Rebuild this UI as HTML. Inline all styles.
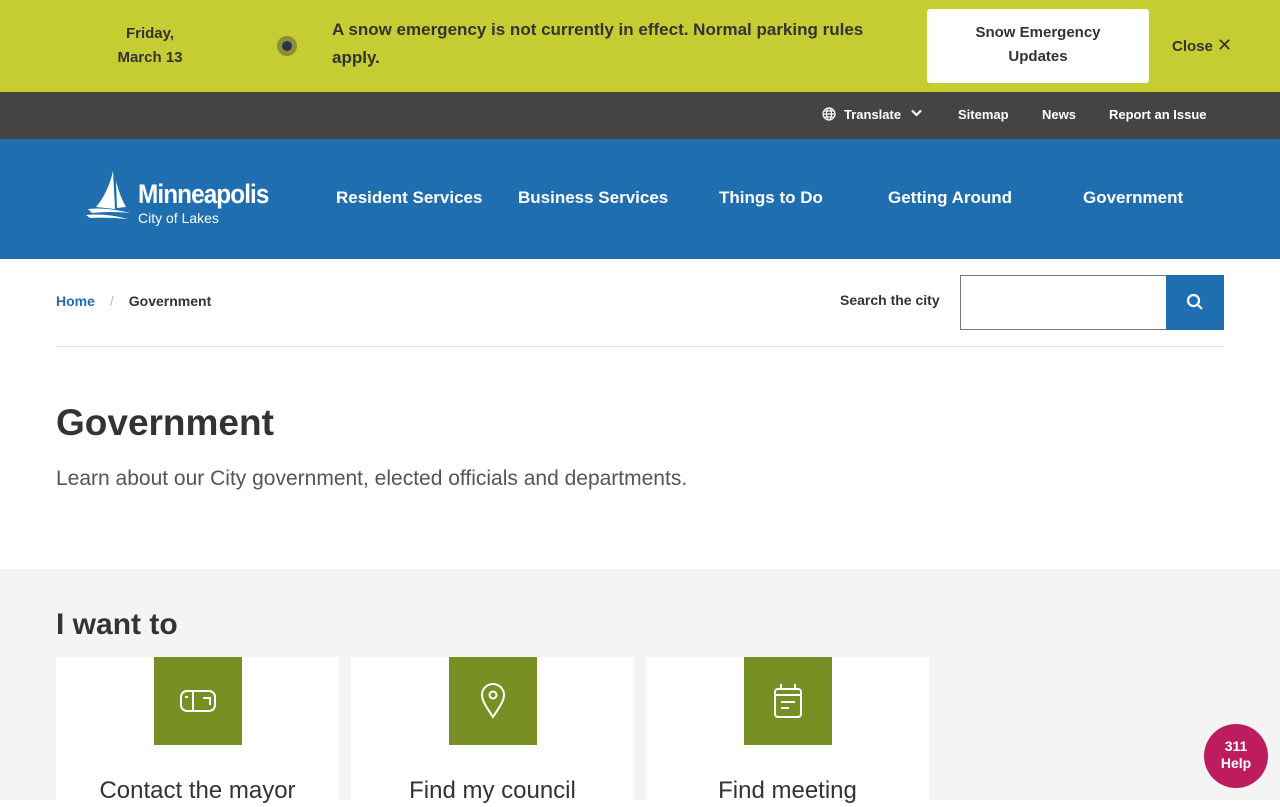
<!DOCTYPE html>
<html><head><meta charset="utf-8"><style>
*{margin:0;padding:0;box-sizing:border-box}
body{width:1280px;height:800px;overflow:hidden;font-family:"Liberation Sans",sans-serif;background:#fff;color:#333;position:relative}
.alert{position:absolute;top:0;left:0;width:1280px;height:92px;background:#c5cd32}
.date{position:absolute;left:110px;top:22px;width:80px;text-align:center;font-weight:bold;font-size:15px;line-height:24px;color:#333}
.dot{position:absolute;left:277px;top:36px;width:20px;height:20px;border-radius:50%;background:#8a8f3a}
.dot:after{content:"";position:absolute;left:5px;top:5px;width:10px;height:10px;border-radius:50%;background:#2d3340}
.msg{position:absolute;left:332px;top:16px;width:560px;font-weight:bold;font-size:17px;line-height:28px;color:#333}
.btn{position:absolute;left:927px;top:9px;width:222px;height:74px;background:#fff;border-radius:3px;text-align:center;font-weight:bold;font-size:15px;line-height:24px;padding-top:12px;color:#333}
.close{position:absolute;left:1172px;top:35px;font-weight:bold;font-size:15px;color:#333}
.util{position:absolute;top:92px;left:0;width:1280px;height:47px;background:#444}
.util span{position:absolute;top:15px;color:#fff;font-weight:bold;font-size:13px}
.nav{position:absolute;top:139px;left:0;width:1280px;height:120px;background:#1f6eb0}
.nav .i{position:absolute;top:49px;color:#fff;font-weight:bold;font-size:17px}
.crumb{position:absolute;top:293px;left:56px;font-size:14px;font-weight:bold}
.sl{position:absolute;left:840px;top:292px;font-size:14px;font-weight:bold;color:#333}
.sbox{position:absolute;left:960px;top:275px;width:207px;height:55px;border:1px solid #777;border-right:none}
.sbtn{position:absolute;left:1166px;top:275px;width:58px;height:55px;background:#1f6eb0}
.hr{position:absolute;left:56px;top:346px;width:1168px;height:1px;background:#ddd}
h1{position:absolute;left:56px;top:402px;font-size:37px;font-weight:bold;color:#333}
.lede{position:absolute;left:56px;top:467px;font-size:21px;color:#555}
.grey{position:absolute;top:569px;left:0;width:1280px;height:231px;background:#f3f4f3}
h2{position:absolute;left:56px;top:608px;font-size:30px;font-weight:bold;color:#333}
.card{position:absolute;top:657px;width:283px;height:150px;background:#fff}
.ic{position:absolute;left:98px;top:0;width:88px;height:88px;background:#788f24;display:flex;align-items:center;justify-content:center}
.card p{position:absolute;top:120px;width:100%;text-align:center;font-size:24px;color:#333}
.help{position:absolute;left:1204px;top:724px;width:64px;height:64px;border-radius:50%;background:#bd1d5f;color:#fff;text-align:center;font-weight:bold;font-size:14px;line-height:17px;padding-top:14px}
</style></head><body>
<div class="alert">
<div class="date">Friday,<br>March 13</div>
<div class="dot"></div>
<div class="msg">A snow emergency is not currently in effect. Normal parking rules apply.</div>
<div class="btn">Snow Emergency<br>Updates</div>
<div class="close">Close <span style="font-weight:normal;font-size:18px">✕</span></div>
</div>
<div class="util">
<svg style="position:absolute;left:822px;top:15px" width="14" height="14" viewBox="0 0 14 14" fill="none" stroke="#fff" stroke-width="1.2"><circle cx="7" cy="7" r="6"/><ellipse cx="7" cy="7" rx="2.5" ry="6"/><path d="M1 7h12M2 4h10M2 10h10"/></svg>
<span style="left:844px">Translate</span>
<svg style="position:absolute;left:911px;top:17px" width="11" height="8" viewBox="0 0 11 8" fill="none" stroke="#fff" stroke-width="2.2"><path d="M1 1.5l4.5 4.5 4.5-4.5"/></svg>
<span style="left:958px">Sitemap</span><span style="left:1042px">News</span><span style="left:1109px">Report an Issue</span>
</div>
<div class="nav">
<svg style="position:absolute;left:86px;top:32px" width="46" height="50" viewBox="0 0 46 50"><path d="M27 0 L29 38 L10 36 Q22 22 27 0Z" fill="#fff"/><path d="M30 10 Q34 26 40 36 L31 37Z" fill="#fff"/><path d="M2 38 Q20 36 44 42 Q24 40 6 42Z" fill="#fff"/><path d="M0 44 Q20 42 42 48 Q22 46 4 47Z" fill="#fff"/></svg>
<div style="position:absolute;left:138px;top:40px;color:#fff;font-weight:bold;font-size:27px;letter-spacing:-1px;transform:scaleX(.9);transform-origin:left">Minneapolis</div>
<div style="position:absolute;left:138px;top:71px;color:#fff;font-size:14px">City of Lakes</div>
<span class="i" style="left:336px">Resident Services</span><span class="i" style="left:518px">Business Services</span><span class="i" style="left:719px">Things to Do</span><span class="i" style="left:888px">Getting Around</span><span class="i" style="left:1083px">Government</span>
</div>
<div class="crumb"><span style="color:#1f6eb0">Home</span><span style="color:#bbb;font-weight:normal;margin:0 15px">/</span><span>Government</span></div>
<div class="sl">Search the city</div>
<div class="sbox"></div>
<div class="sbtn"><svg style="position:absolute;left:20px;top:18px" width="18" height="18" viewBox="0 0 18 18" fill="none" stroke="#fff" stroke-width="2.2"><circle cx="7.5" cy="7.5" r="5.5"/><path d="M11.5 11.5L16 16"/></svg></div>
<div class="hr"></div>
<h1>Government</h1>
<div class="lede">Learn about our City government, elected officials and departments.</div>
<div class="grey"></div>
<h2>I want to</h2>
<div class="card" style="left:56px"><div class="ic"><svg width="38" height="28" viewBox="0 0 38 28" fill="none" stroke="#fff" stroke-width="2"><rect x="2" y="4" width="34" height="20" rx="6"/><path d="M14 4v20M6 10h3M24 11h7v7"/></svg></div><p>Contact the mayor</p></div>
<div class="card" style="left:351px"><div class="ic"><svg width="28" height="36" viewBox="0 0 28 36" fill="none" stroke="#fff" stroke-width="2"><path d="M14 34 C6 22 3 17 3 12 A11 11 0 0 1 25 12 C25 17 22 22 14 34Z"/><circle cx="14" cy="12" r="3.5"/></svg></div><p>Find my council</p></div>
<div class="card" style="left:646px"><div class="ic"><svg width="32" height="36" viewBox="0 0 32 36" fill="none" stroke="#fff" stroke-width="2"><rect x="3" y="6" width="26" height="28" rx="3"/><path d="M9 1v5M23 1v5M3 12h26M9 19h14M9 25h8"/></svg></div><p>Find meeting</p></div>
<div class="help">311<br>Help</div>
</body></html>
